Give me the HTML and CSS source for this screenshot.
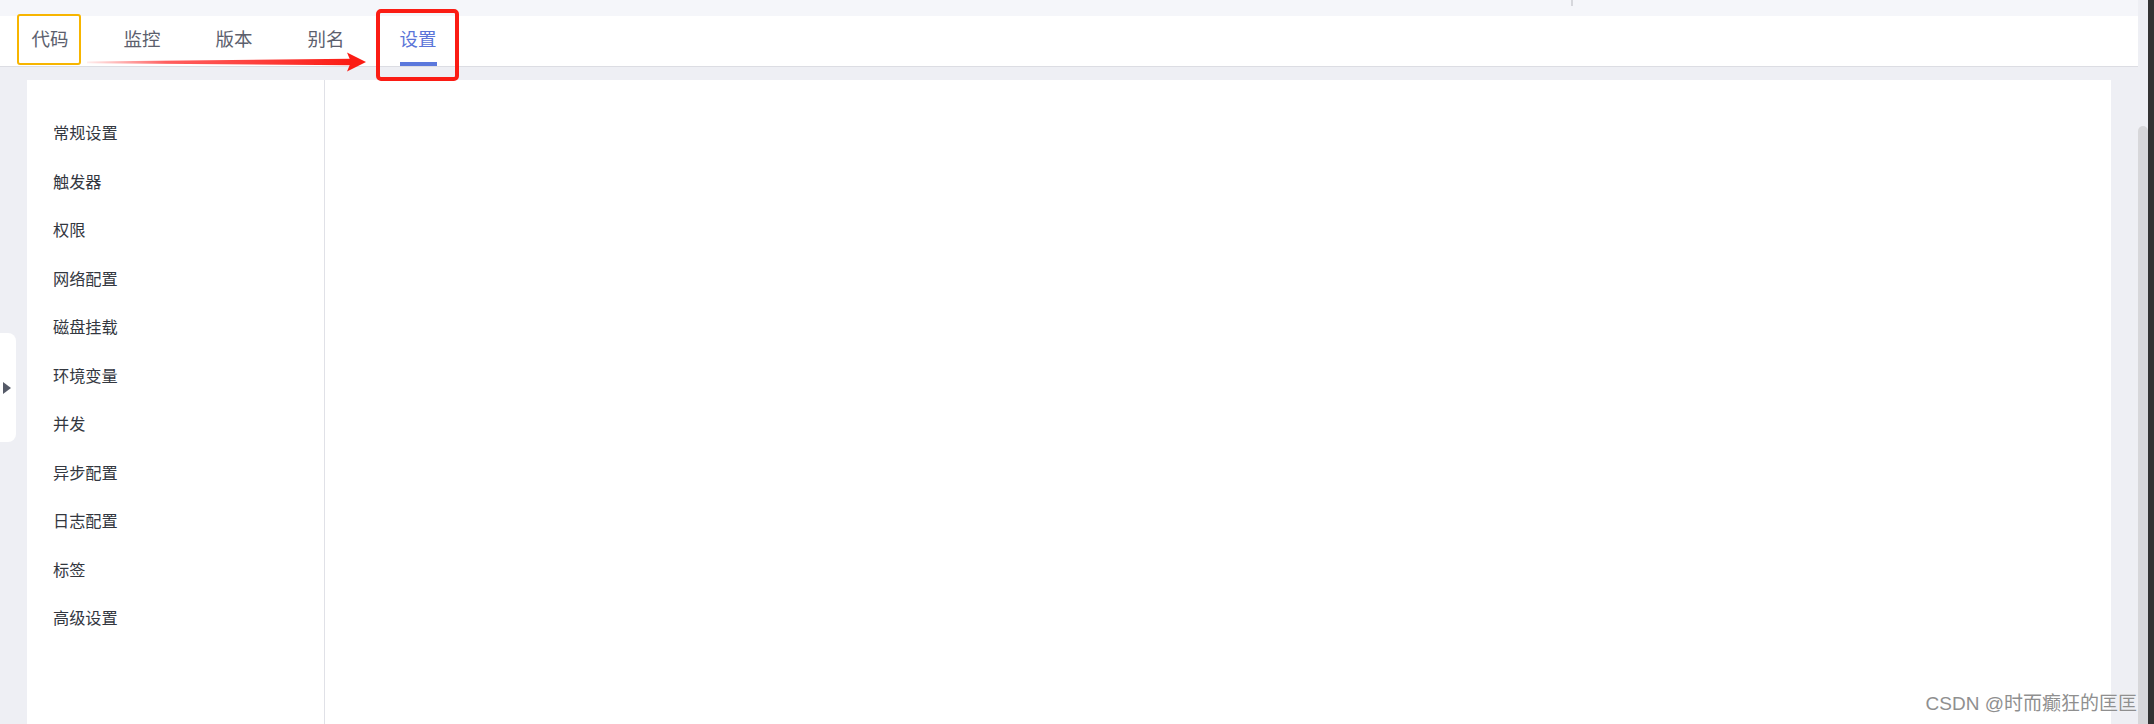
FILE: index.html
```html
<!DOCTYPE html>
<html lang="zh-CN">
<head>
<meta charset="utf-8">
<title>设置</title>
<link rel="stylesheet" href="styles.css">
</head>
<body>
<div class="window">
  <div class="main">
    <div class="topstrip"><span class="tick"></span></div>
    <div class="tabbar">
      <div class="tab">代码</div>
      <div class="tab">监控</div>
      <div class="tab">版本</div>
      <div class="tab">别名</div>
      <div class="tab active">设置</div>
    </div>
    <div class="content">
      <div class="panel">
        <ul class="sidenav">
          <li>常规设置</li>
          <li>触发器</li>
          <li>权限</li>
          <li>网络配置</li>
          <li>磁盘挂载</li>
          <li>环境变量</li>
          <li>并发</li>
          <li>异步配置</li>
          <li>日志配置</li>
          <li>标签</li>
          <li>高级设置</li>
        </ul>
        <div class="detail"></div>
      </div>
    </div>
    <div class="collapse"><span class="tri"></span></div>
    <div class="mark-orange"></div>
    <div class="mark-red"></div>
    <svg class="arrow" width="300" height="30" viewBox="0 0 300 30">
      <defs>
        <linearGradient id="ag" x1="0" y1="0" x2="1" y2="0">
          <stop offset="0" stop-color="#ff2a2a" stop-opacity="0.08"/>
          <stop offset="0.3" stop-color="#ff2a2a" stop-opacity="0.75"/>
          <stop offset="1" stop-color="#fb1c14"/>
        </linearGradient>
      </defs>
      <polygon points="0,12.6 264,9.8 264,16.2 0,14.2" fill="url(#ag)"/>
      <polygon points="279,13 260,3.5 264,13 260,22.5" fill="#fb1c14"/>
    </svg>
    <div class="watermark">CSDN @时而癫狂的匡匡</div>
  </div>
  <div class="vscroll"><div class="thumb"></div></div>
  <div class="edge"></div>
</div>
</body>
</html>
```
FILE: styles.css
```css
* { box-sizing: border-box; }
html, body { margin: 0; padding: 0; }
body {
  width: 2154px;
  height: 724px;
  overflow: hidden;
  font-family: "Noto Sans CJK SC", "Noto Sans", sans-serif;
  background: #eeeff4;
}
.window {
  display: flex;
  height: 724px;
}
.main {
  position: relative;
  width: 2138px;
  display: flex;
  flex-direction: column;
  background: #eeeff4;
}
.topstrip {
  height: 16px;
  background: #f5f6fa;
  position: relative;
}
.tick {
  position: absolute;
  left: 1571px;
  top: 0;
  width: 2px;
  height: 6px;
  background: #d6d7dc;
}
.tabbar {
  height: 51px;
  background: #fff;
  border-bottom: 1px solid #dcdde3;
  display: flex;
  padding-left: 4px;
}
.tab {
  padding: 0 27.5px;
  height: 50px;
  line-height: 45px;
  font-size: 18.5px;
  color: #5c606d;
  position: relative;
}
.tab.active { color: #5b74d8; }
.tab.active::after {
  content: "";
  position: absolute;
  left: 27.5px;
  right: 27.5px;
  bottom: 0;
  height: 4px;
  background: #5b78dc;
}
.content {
  flex: 1;
  padding: 13px 27px 0 27px;
  display: flex;
  min-height: 0;
}
.panel {
  flex: 1;
  background: #fff;
  display: flex;
}
.sidenav {
  list-style: none;
  margin: 0;
  padding: 28px 0 0 26px;
  width: 298px;
  border-right: 1px solid #e0e1e7;
}
.sidenav li {
  height: 48.5px;
  line-height: 48.5px;
  font-size: 16.2px;
  color: #33373f;
}
.detail { flex: 1; }
.collapse {
  position: absolute;
  left: 0;
  top: 333px;
  width: 16px;
  height: 109px;
  background: #fff;
  border-radius: 0 8px 8px 0;
}
.tri {
  position: absolute;
  left: 3px;
  top: 49px;
  width: 0;
  height: 0;
  border-top: 6px solid transparent;
  border-bottom: 6px solid transparent;
  border-left: 8px solid #555a68;
}
.mark-orange {
  position: absolute;
  left: 17px;
  top: 14px;
  width: 64px;
  height: 51px;
  border: 2px solid #f7b500;
  border-radius: 3px;
}
.mark-red {
  position: absolute;
  left: 376px;
  top: 9px;
  width: 83px;
  height: 72px;
  border: 4.5px solid #fb1c14;
  border-radius: 5px;
}
.arrow {
  position: absolute;
  left: 87px;
  top: 49px;
}
.watermark {
  position: absolute;
  right: 1px;
  top: 690px;
  font-size: 19px;
  line-height: 28px;
  color: #8f8f8f;
  text-shadow: 0 0 1px #fff;
  font-family: "Liberation Sans", "Noto Sans CJK SC", sans-serif;
}
.vscroll {
  width: 10px;
  background: #eeeff4;
  position: relative;
}
.thumb {
  position: absolute;
  left: 0;
  right: 0;
  top: 126px;
  bottom: 0;
  background: #d7d7da;
  border-radius: 5px 5px 0 0;
}
.edge {
  width: 6px;
  background: #333333;
}
```
